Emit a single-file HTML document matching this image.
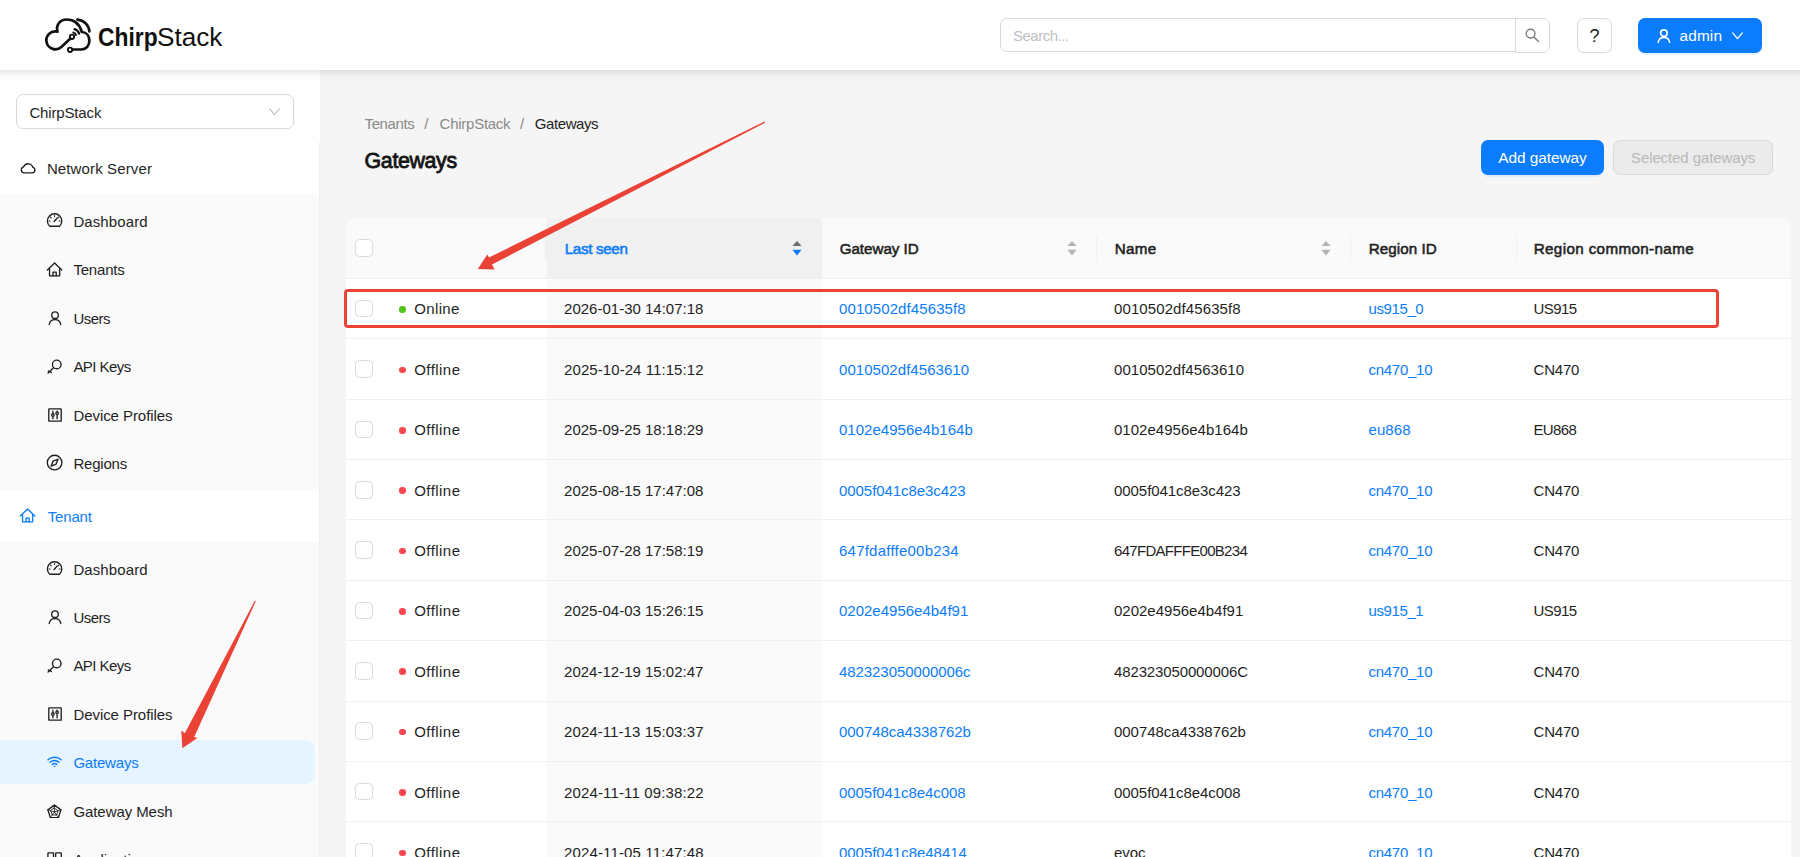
<!DOCTYPE html>
<html lang="en">
<head>
<meta charset="utf-8">
<title>ChirpStack LoRaWAN Network-Server - Gateways</title>
<style>

*{box-sizing:border-box}
html,body{margin:0;padding:0}
body{width:1800px;height:857px;overflow:hidden;position:relative;background:#f5f5f5;font-family:"Liberation Sans", Arial, sans-serif;font-size:15px;color:#1f1f1f}
.abs{position:absolute}
svg{display:block}
.t{position:absolute;white-space:nowrap;line-height:24px;height:24px}
#header{position:absolute;left:-30px;top:0;width:1860px;height:70px;background:#fff;box-shadow:0 2px 8px rgba(0,0,0,.13);z-index:10}
#sider{position:absolute;left:0;top:0;width:320px;height:857px;background:#fff;overflow:hidden}
.sub{position:absolute;left:0;width:319px;background:#fafafa}
.sel{position:absolute;left:0;width:315px;height:44px;background:#e6f4ff;border-radius:0 9px 9px 0}
#main{position:absolute;left:320px;top:0;width:1480px;height:857px;overflow:hidden}
#table{position:absolute;left:346px;top:218px;width:1445px;height:700px;background:#fff;border-radius:9px 9px 0 0;overflow:hidden}
.th{position:absolute;top:0;height:61px;background:#fafafa;border-bottom:1px solid #f0f0f0}
.th.sorted{background:#f0f0f0}
.sep{position:absolute;top:18px;width:1px;height:24.5px;background:#f0f0f0}
.row{position:absolute;left:0;width:1445px;height:60.5px;border-bottom:1px solid #f0f0f0}
.lk{color:#0b7cfb}
.cb{position:absolute;width:17.6px;height:17.6px;border:1px solid #d9d9d9;border-radius:4.4px;background:#fff}
.dot{position:absolute;width:6.6px;height:6.6px;border-radius:50%}
.sortcol{position:absolute;left:201px;width:275px;top:61px;height:700px;background:#fafafa}

</style>
</head>
<body>

<div id="sider">
<div class="abs" style="left:16px;top:94px;width:278px;height:35px;border:1px solid #d9d9d9;border-radius:7px;background:#fff"></div>
<div class="t" style="left:29.4px;top:100.8px;color:#1f1f1f;letter-spacing:-0.15px;">ChirpStack</div>
<svg class="abs" style="left:268.3px;top:105.3px;color:#bfbfbf" width="13" height="13" viewBox="0 0 16 16" fill="none" stroke="currentColor" stroke-width="1.3" stroke-linecap="round" stroke-linejoin="round"><path d="M2 4.8l6 7 6-7"/></svg>
<div class="abs" style="left:319px;top:142px;width:1px;height:720px;background:#f0f0f0"></div>
<div class="sub" style="top:194.9px;height:294px"></div>
<div class="sub" style="top:542.3px;height:320px"></div>
<div class="sel" style="top:739.8px"></div>
<svg class="abs" style="left:20.41px;top:160.01px;color:#1f1f1f" width="16.17" height="16.17" viewBox="0 0 16 16" fill="none" stroke="currentColor" stroke-width="1.33" stroke-linecap="round" stroke-linejoin="round"><path d="M4.3 12.8h7.8a2.8 2.8 0 0 0 .6-5.5A4.8 4.8 0 0 0 3.6 6.8a3.05 3.05 0 0 0 .7 6z"/></svg>
<div class="t" style="left:46.9px;top:156.8px;color:#1f1f1f;letter-spacing:0.13px;">Network Server</div>
<svg class="abs" style="left:46px;top:212.35px;color:#1f1f1f" width="17.2" height="17.2" viewBox="0 0 16 16" fill="none" stroke="currentColor" stroke-width="1.25" stroke-linecap="round" stroke-linejoin="round"><path d="M3.5 13.3h9a6.7 6.7 0 1 0-9 0z"/><path d="M7.6 8.9l2.7-3.2" stroke-width="1.4"/><path d="M8 3.3v1M4.2 4.8l.7.7M11.8 4.8l-.7.7M2.8 8.3h1M12.2 8.3h1" stroke-width="1"/></svg>
<div class="t" style="left:73.4px;top:209.8px;color:#1f1f1f;letter-spacing:0.1px;">Dashboard</div>
<svg class="abs" style="left:46px;top:260.75px;color:#1f1f1f" width="17.2" height="17.2" viewBox="0 0 16 16" fill="none" stroke="currentColor" stroke-width="1.25" stroke-linecap="round" stroke-linejoin="round"><path d="M1.3 8.3L8 1.9l6.7 6.4"/><path d="M3.3 7.2v6.6h9.4V7.2"/><path d="M6.5 13.8v-3.5h3v3.5"/></svg>
<div class="t" style="left:73.4px;top:257.8px;color:#1f1f1f;letter-spacing:-0.19px;">Tenants</div>
<svg class="abs" style="left:46.6px;top:309.75px;color:#1f1f1f" width="16" height="16" viewBox="0 0 16 16" fill="none" stroke="currentColor" stroke-width="1.34" stroke-linecap="round" stroke-linejoin="round"><circle cx="8" cy="5.2" r="3.3"/><path d="M2.2 14.5a5.9 5.9 0 0 1 11.6 0"/></svg>
<div class="t" style="left:73.4px;top:306.8px;color:#1f1f1f;letter-spacing:-0.54px;">Users</div>
<svg class="abs" style="left:46px;top:357.55px;color:#1f1f1f" width="17.2" height="17.2" viewBox="0 0 16 16" fill="none" stroke="currentColor" stroke-width="1.25" stroke-linecap="round" stroke-linejoin="round"><circle cx="10" cy="6" r="4"/><path d="M7 9L1.9 13.9M3.7 12.2l1.3 1.3M2.2 12.1l1 1"/></svg>
<div class="t" style="left:73.4px;top:354.8px;color:#1f1f1f;letter-spacing:-0.56px;">API Keys</div>
<svg class="abs" style="left:46.6px;top:406.55px;color:#1f1f1f" width="16" height="16" viewBox="0 0 16 16" fill="none" stroke="currentColor" stroke-width="1.34" stroke-linecap="round" stroke-linejoin="round"><rect x="1.8" y="1.8" width="12.4" height="12.4" rx=".5"/><path d="M5.9 4.2v2.3M5.9 9.4v2.4M10.1 4.2v.7M10.1 7.6v4.2"/><circle cx="5.9" cy="7.9" r="1.25"/><circle cx="10.1" cy="6.2" r="1.25"/></svg>
<div class="t" style="left:73.4px;top:403.8px;color:#1f1f1f;letter-spacing:-0.06px;">Device Profiles</div>
<svg class="abs" style="left:46px;top:454.35px;color:#1f1f1f" width="17.2" height="17.2" viewBox="0 0 16 16" fill="none" stroke="currentColor" stroke-width="1.25" stroke-linecap="round" stroke-linejoin="round"><circle cx="8" cy="8" r="6.8"/><path d="M11.2 4.8L9.4 9.4 4.8 11.2l1.8-4.6z"/></svg>
<div class="t" style="left:73.4px;top:451.8px;color:#1f1f1f;letter-spacing:-0.21px;">Regions</div>
<svg class="abs" style="left:19.4px;top:506.9px;color:#0b7cfb" width="17.2" height="17.2" viewBox="0 0 16 16" fill="none" stroke="currentColor" stroke-width="1.25" stroke-linecap="round" stroke-linejoin="round"><path d="M1.3 8.3L8 1.9l6.7 6.4"/><path d="M3.3 7.2v6.6h9.4V7.2"/><path d="M6.5 13.8v-3.5h3v3.5"/></svg>
<div class="t" style="left:47.7px;top:504.8px;color:#0b7cfb;letter-spacing:-0.15px;">Tenant</div>
<svg class="abs" style="left:46px;top:560.4px;color:#1f1f1f" width="17.2" height="17.2" viewBox="0 0 16 16" fill="none" stroke="currentColor" stroke-width="1.25" stroke-linecap="round" stroke-linejoin="round"><path d="M3.5 13.3h9a6.7 6.7 0 1 0-9 0z"/><path d="M7.6 8.9l2.7-3.2" stroke-width="1.4"/><path d="M8 3.3v1M4.2 4.8l.7.7M11.8 4.8l-.7.7M2.8 8.3h1M12.2 8.3h1" stroke-width="1"/></svg>
<div class="t" style="left:73.4px;top:557.8px;color:#1f1f1f;letter-spacing:0.1px;">Dashboard</div>
<svg class="abs" style="left:46.6px;top:609.4px;color:#1f1f1f" width="16" height="16" viewBox="0 0 16 16" fill="none" stroke="currentColor" stroke-width="1.34" stroke-linecap="round" stroke-linejoin="round"><circle cx="8" cy="5.2" r="3.3"/><path d="M2.2 14.5a5.9 5.9 0 0 1 11.6 0"/></svg>
<div class="t" style="left:73.4px;top:605.8px;color:#1f1f1f;letter-spacing:-0.54px;">Users</div>
<svg class="abs" style="left:46px;top:657.2px;color:#1f1f1f" width="17.2" height="17.2" viewBox="0 0 16 16" fill="none" stroke="currentColor" stroke-width="1.25" stroke-linecap="round" stroke-linejoin="round"><circle cx="10" cy="6" r="4"/><path d="M7 9L1.9 13.9M3.7 12.2l1.3 1.3M2.2 12.1l1 1"/></svg>
<div class="t" style="left:73.4px;top:653.8px;color:#1f1f1f;letter-spacing:-0.56px;">API Keys</div>
<svg class="abs" style="left:46.6px;top:706.2px;color:#1f1f1f" width="16" height="16" viewBox="0 0 16 16" fill="none" stroke="currentColor" stroke-width="1.34" stroke-linecap="round" stroke-linejoin="round"><rect x="1.8" y="1.8" width="12.4" height="12.4" rx=".5"/><path d="M5.9 4.2v2.3M5.9 9.4v2.4M10.1 4.2v.7M10.1 7.6v4.2"/><circle cx="5.9" cy="7.9" r="1.25"/><circle cx="10.1" cy="6.2" r="1.25"/></svg>
<div class="t" style="left:73.4px;top:702.8px;color:#1f1f1f;letter-spacing:-0.06px;">Device Profiles</div>
<svg class="abs" style="left:47.03px;top:754.33px;color:#0b7cfb" width="15.14" height="15.14" viewBox="0 0 16 16" fill="none" stroke="currentColor" stroke-width="1.42" stroke-linecap="round" stroke-linejoin="round"><path d="M1 6.2a10.2 10.2 0 0 1 14 0"/><path d="M3.3 8.7a7 7 0 0 1 9.4 0"/><path d="M5.6 11.1a3.6 3.6 0 0 1 4.8 0"/><circle cx="8" cy="13" r=".85" fill="currentColor" stroke="none"/></svg>
<div class="t" style="left:73.4px;top:750.8px;color:#0b7cfb;letter-spacing:-0.2px;">Gateways</div>
<svg class="abs" style="left:47.2px;top:803.61px;color:#1f1f1f" width="14.79" height="14.79" viewBox="0 0 16 16" fill="none" stroke="currentColor" stroke-width="1.45" stroke-linecap="round" stroke-linejoin="round"><path d="M8 1.2l7.1 5.15-2.7 8.35H3.6L.9 6.35z"/><path d="M8 4.5l3.9 2.85-1.5 4.55H5.6L4.1 7.35z" stroke-width="1"/><path d="M8 1.2v7.4M15.1 6.35L8 8.6M12.4 14.7L8 8.6M3.6 14.7L8 8.6M.9 6.35L8 8.6" stroke-width=".9"/></svg>
<div class="t" style="left:73.4px;top:799.8px;color:#1f1f1f;letter-spacing:-0.07px;">Gateway Mesh</div>
<svg class="abs" style="left:46px;top:850.8px;color:#1f1f1f" width="17.2" height="17.2" viewBox="0 0 16 16" fill="none" stroke="currentColor" stroke-width="1.25" stroke-linecap="round" stroke-linejoin="round"><rect x="1.8" y="1.8" width="5.2" height="5.2" rx=".4"/><rect x="9" y="1.8" width="5.2" height="5.2" rx=".4"/><rect x="1.8" y="9" width="5.2" height="5.2" rx=".4"/><rect x="9" y="9" width="5.2" height="5.2" rx=".4"/></svg>
<div class="t" style="left:73.4px;top:847.8px;color:#1f1f1f;letter-spacing:0.1px;">Applications</div>
</div>
<div id="main" style="left:0;width:1800px;pointer-events:none;background:transparent">
<div class="t" style="left:364.5px;top:111.8px;color:#8a8a8a;letter-spacing:-0.37px;">Tenants</div>
<div class="t" style="left:424.3px;top:111.8px;color:#8a8a8a;">/</div>
<div class="t" style="left:439.6px;top:111.8px;color:#8a8a8a;letter-spacing:-0.26px;">ChirpStack</div>
<div class="t" style="left:520px;top:111.8px;color:#8a8a8a;">/</div>
<div class="t" style="left:534.8px;top:111.8px;color:#1f1f1f;letter-spacing:-0.41px;">Gateways</div>
<div class="t" style="left:364.6px;top:146.3px;font-size:21.4px;line-height:30px;height:30px;color:#141414;letter-spacing:-0.37px;-webkit-text-stroke:.8px;">Gateways</div>
<div class="abs" style="left:1481px;top:140px;width:123px;height:34.5px;border-radius:7px;background:#0b7cfb;box-shadow:0 2px 0 rgba(5,145,255,.1)"></div>
<div class="t" style="left:1498.2px;top:145.8px;font-size:15.4px;color:#fff;letter-spacing:-0.04px;">Add gateway</div>
<div class="abs" style="left:1613px;top:140px;width:160px;height:34.5px;border-radius:7px;background:#ebebeb;border:1px solid #d9d9d9"></div>
<div class="t" style="left:1631px;top:145.8px;color:#b8b8b8;letter-spacing:-0.1px;">Selected gateways</div>
</div>
<div id="table">
<div class="sortcol"></div>
<div class="th" style="left:0px;width:201px"></div>
<div class="th sorted" style="left:201px;width:275px"></div>
<div class="t" style="left:218.7px;top:18.8px;font-size:15.2px;color:#0b7cfb;letter-spacing:-0.33px;-webkit-text-stroke:.55px;">Last seen</div>
<div class="th" style="left:476px;width:275px"></div>
<div class="t" style="left:493.7px;top:18.8px;font-size:15.2px;color:#1f1f1f;letter-spacing:-0.04px;-webkit-text-stroke:.55px;">Gateway ID</div>
<div class="th" style="left:751px;width:254px"></div>
<div class="t" style="left:768.7px;top:18.8px;font-size:15.2px;color:#1f1f1f;letter-spacing:0.33px;-webkit-text-stroke:.55px;">Name</div>
<div class="th" style="left:1005px;width:165px"></div>
<div class="t" style="left:1022.7px;top:18.8px;font-size:15.2px;color:#1f1f1f;letter-spacing:0.06px;-webkit-text-stroke:.55px;">Region ID</div>
<div class="th" style="left:1170px;width:275px"></div>
<div class="t" style="left:1187.7px;top:18.8px;font-size:15.2px;color:#1f1f1f;letter-spacing:0.37px;-webkit-text-stroke:.55px;">Region common-name</div>
<div class="sep" style="left:199px;width:2px"></div>
<div class="sep" style="left:749.7px"></div>
<div class="sep" style="left:1004.2px"></div>
<div class="sep" style="left:1169.5px"></div>
<div class="cb" style="left:9.2px;top:21.4px"></div>
<svg class="abs" style="left:446px;top:22px" width="10" height="16" viewBox="0 0 10 16"><path d="M5 .9L9.6 6H.4z" fill="#6b6b6b"/><path d="M5 15.4L.4 9.8h9.2z" fill="#0b7cfb"/></svg>
<svg class="abs" style="left:721px;top:22px" width="10" height="16" viewBox="0 0 10 16"><path d="M5 .9L9.6 6H.4z" fill="#b3b3b3"/><path d="M5 15.4L.4 9.8h9.2z" fill="#b3b3b3"/></svg>
<svg class="abs" style="left:975px;top:22px" width="10" height="16" viewBox="0 0 10 16"><path d="M5 .9L9.6 6H.4z" fill="#b3b3b3"/><path d="M5 15.4L.4 9.8h9.2z" fill="#b3b3b3"/></svg>
<div class="row" style="top:61px;height:60px">
<div class="cb" style="left:9.2px;top:20.74px"></div>
<div class="dot" style="left:53.2px;top:27.14px;background:#52c41a"></div>
<div class="t" style="left:68.2px;top:17.8px;color:#1f1f1f;letter-spacing:0.37px;">Online</div>
<div class="t" style="left:218.1px;top:17.8px;color:#1f1f1f;">2026-01-30 14:07:18</div>
<div class="t" style="left:493px;top:17.8px;color:#0b7cfb;letter-spacing:0.1px;">0010502df45635f8</div>
<div class="t" style="left:768px;top:17.8px;color:#1f1f1f;letter-spacing:0.1px;">0010502df45635f8</div>
<div class="t" style="left:1022.5px;top:17.8px;color:#0b7cfb;letter-spacing:-0.39px;">us915_0</div>
<div class="t" style="left:1187.5px;top:17.8px;color:#1f1f1f;letter-spacing:-0.56px;">US915</div>
</div>
<div class="row" style="top:121px;height:61px">
<div class="cb" style="left:9.2px;top:21.13px"></div>
<div class="dot" style="left:53.2px;top:27.53px;background:#fb464f"></div>
<div class="t" style="left:68.2px;top:18.8px;color:#1f1f1f;letter-spacing:0.45px;">Offline</div>
<div class="t" style="left:218.1px;top:18.8px;color:#1f1f1f;letter-spacing:0.07px;">2025-10-24 11:15:12</div>
<div class="t" style="left:493px;top:18.8px;color:#0b7cfb;letter-spacing:0.05px;">0010502df4563610</div>
<div class="t" style="left:768px;top:18.8px;color:#1f1f1f;letter-spacing:0.05px;">0010502df4563610</div>
<div class="t" style="left:1022.5px;top:18.8px;color:#0b7cfb;letter-spacing:-0.27px;">cn470_10</div>
<div class="t" style="left:1187.5px;top:18.8px;color:#1f1f1f;letter-spacing:-0.19px;">CN470</div>
</div>
<div class="row" style="top:182px;height:60px">
<div class="cb" style="left:9.2px;top:20.52px"></div>
<div class="dot" style="left:53.2px;top:26.92px;background:#fb464f"></div>
<div class="t" style="left:68.2px;top:17.8px;color:#1f1f1f;letter-spacing:0.45px;">Offline</div>
<div class="t" style="left:218.1px;top:17.8px;color:#1f1f1f;">2025-09-25 18:18:29</div>
<div class="t" style="left:493px;top:17.8px;color:#0b7cfb;letter-spacing:0.02px;">0102e4956e4b164b</div>
<div class="t" style="left:768px;top:17.8px;color:#1f1f1f;letter-spacing:0.02px;">0102e4956e4b164b</div>
<div class="t" style="left:1022.5px;top:17.8px;color:#0b7cfb;letter-spacing:0.07px;">eu868</div>
<div class="t" style="left:1187.5px;top:17.8px;color:#1f1f1f;letter-spacing:-0.64px;">EU868</div>
</div>
<div class="row" style="top:242px;height:60px">
<div class="cb" style="left:9.2px;top:20.91px"></div>
<div class="dot" style="left:53.2px;top:27.31px;background:#fb464f"></div>
<div class="t" style="left:68.2px;top:18.8px;color:#1f1f1f;letter-spacing:0.45px;">Offline</div>
<div class="t" style="left:218.1px;top:18.8px;color:#1f1f1f;">2025-08-15 17:47:08</div>
<div class="t" style="left:493px;top:18.8px;color:#0b7cfb;letter-spacing:-0.06px;">0005f041c8e3c423</div>
<div class="t" style="left:768px;top:18.8px;color:#1f1f1f;letter-spacing:-0.06px;">0005f041c8e3c423</div>
<div class="t" style="left:1022.5px;top:18.8px;color:#0b7cfb;letter-spacing:-0.27px;">cn470_10</div>
<div class="t" style="left:1187.5px;top:18.8px;color:#1f1f1f;letter-spacing:-0.19px;">CN470</div>
</div>
<div class="row" style="top:302px;height:61px">
<div class="cb" style="left:9.2px;top:21.3px"></div>
<div class="dot" style="left:53.2px;top:27.7px;background:#fb464f"></div>
<div class="t" style="left:68.2px;top:18.8px;color:#1f1f1f;letter-spacing:0.45px;">Offline</div>
<div class="t" style="left:218.1px;top:18.8px;color:#1f1f1f;">2025-07-28 17:58:19</div>
<div class="t" style="left:493px;top:18.8px;color:#0b7cfb;letter-spacing:0.23px;">647fdafffe00b234</div>
<div class="t" style="left:768px;top:18.8px;color:#1f1f1f;letter-spacing:-0.7px;">647FDAFFFE00B234</div>
<div class="t" style="left:1022.5px;top:18.8px;color:#0b7cfb;letter-spacing:-0.27px;">cn470_10</div>
<div class="t" style="left:1187.5px;top:18.8px;color:#1f1f1f;letter-spacing:-0.19px;">CN470</div>
</div>
<div class="row" style="top:363px;height:60px">
<div class="cb" style="left:9.2px;top:20.69px"></div>
<div class="dot" style="left:53.2px;top:27.09px;background:#fb464f"></div>
<div class="t" style="left:68.2px;top:17.8px;color:#1f1f1f;letter-spacing:0.45px;">Offline</div>
<div class="t" style="left:218.1px;top:17.8px;color:#1f1f1f;">2025-04-03 15:26:15</div>
<div class="t" style="left:493px;top:17.8px;color:#0b7cfb;">0202e4956e4b4f91</div>
<div class="t" style="left:768px;top:17.8px;color:#1f1f1f;">0202e4956e4b4f91</div>
<div class="t" style="left:1022.5px;top:17.8px;color:#0b7cfb;letter-spacing:-0.39px;">us915_1</div>
<div class="t" style="left:1187.5px;top:17.8px;color:#1f1f1f;letter-spacing:-0.56px;">US915</div>
</div>
<div class="row" style="top:423px;height:61px">
<div class="cb" style="left:9.2px;top:21.08px"></div>
<div class="dot" style="left:53.2px;top:27.48px;background:#fb464f"></div>
<div class="t" style="left:68.2px;top:18.8px;color:#1f1f1f;letter-spacing:0.45px;">Offline</div>
<div class="t" style="left:218.1px;top:18.8px;color:#1f1f1f;">2024-12-19 15:02:47</div>
<div class="t" style="left:493px;top:18.8px;color:#0b7cfb;letter-spacing:-0.07px;">482323050000006c</div>
<div class="t" style="left:768px;top:18.8px;color:#1f1f1f;letter-spacing:-0.13px;">482323050000006C</div>
<div class="t" style="left:1022.5px;top:18.8px;color:#0b7cfb;letter-spacing:-0.27px;">cn470_10</div>
<div class="t" style="left:1187.5px;top:18.8px;color:#1f1f1f;letter-spacing:-0.19px;">CN470</div>
</div>
<div class="row" style="top:484px;height:60px">
<div class="cb" style="left:9.2px;top:20.48px"></div>
<div class="dot" style="left:53.2px;top:26.88px;background:#fb464f"></div>
<div class="t" style="left:68.2px;top:17.8px;color:#1f1f1f;letter-spacing:0.45px;">Offline</div>
<div class="t" style="left:218.1px;top:17.8px;color:#1f1f1f;letter-spacing:0.07px;">2024-11-13 15:03:37</div>
<div class="t" style="left:493px;top:17.8px;color:#0b7cfb;letter-spacing:-0.05px;">000748ca4338762b</div>
<div class="t" style="left:768px;top:17.8px;color:#1f1f1f;letter-spacing:-0.05px;">000748ca4338762b</div>
<div class="t" style="left:1022.5px;top:17.8px;color:#0b7cfb;letter-spacing:-0.27px;">cn470_10</div>
<div class="t" style="left:1187.5px;top:17.8px;color:#1f1f1f;letter-spacing:-0.19px;">CN470</div>
</div>
<div class="row" style="top:544px;height:60px">
<div class="cb" style="left:9.2px;top:20.87px"></div>
<div class="dot" style="left:53.2px;top:27.27px;background:#fb464f"></div>
<div class="t" style="left:68.2px;top:18.8px;color:#1f1f1f;letter-spacing:0.45px;">Offline</div>
<div class="t" style="left:218.1px;top:18.8px;color:#1f1f1f;letter-spacing:0.13px;">2024-11-11 09:38:22</div>
<div class="t" style="left:493px;top:18.8px;color:#0b7cfb;letter-spacing:-0.06px;">0005f041c8e4c008</div>
<div class="t" style="left:768px;top:18.8px;color:#1f1f1f;letter-spacing:-0.06px;">0005f041c8e4c008</div>
<div class="t" style="left:1022.5px;top:18.8px;color:#0b7cfb;letter-spacing:-0.27px;">cn470_10</div>
<div class="t" style="left:1187.5px;top:18.8px;color:#1f1f1f;letter-spacing:-0.19px;">CN470</div>
</div>
<div class="row" style="top:604px;height:61px">
<div class="cb" style="left:9.2px;top:21.26px"></div>
<div class="dot" style="left:53.2px;top:27.66px;background:#fb464f"></div>
<div class="t" style="left:68.2px;top:18.8px;color:#1f1f1f;letter-spacing:0.45px;">Offline</div>
<div class="t" style="left:218.1px;top:18.8px;color:#1f1f1f;letter-spacing:0.13px;">2024-11-05 11:47:48</div>
<div class="t" style="left:493px;top:18.8px;color:#0b7cfb;letter-spacing:-0.04px;">0005f041c8e48414</div>
<div class="t" style="left:768px;top:18.8px;color:#1f1f1f;letter-spacing:-0.03px;">evoc</div>
<div class="t" style="left:1022.5px;top:18.8px;color:#0b7cfb;letter-spacing:-0.27px;">cn470_10</div>
<div class="t" style="left:1187.5px;top:18.8px;color:#1f1f1f;letter-spacing:-0.19px;">CN470</div>
</div>
</div>
<div id="header"><div class="abs" style="left:30px;top:0;width:1800px;height:70px">
<svg class="abs" style="left:40px;top:10px" width="60" height="50" viewBox="40 10 60 50" fill="none" stroke="#111" stroke-width="2.7" stroke-linecap="round" stroke-linejoin="round">
<path d="M70.4 38.6L61.35 46.9A8.95 8.95 0 1 1 57.5 31.6C55.6 25.2 60 19.5 66.7 19.5C73.5 19.5 79.3 23.6 81.7 31.4"/>
<path d="M81.9 32C86.8 32.3 89.4 36.3 89.4 40.6C89.4 45.6 86.2 49.5 81.5 49.5H72.4"/>
<path d="M77.4 19.6A12.9 12.9 0 0 1 89.4 31.4"/>
<path d="M74.6 29.2A6.7 6.7 0 0 1 79.1 33.6" stroke-width="2.3"/>
<path d="M73.3 32.4A3.6 3.6 0 0 1 76 35" stroke-width="2"/>
<circle cx="72" cy="36.8" r="2.15" stroke-width="1.9"/>
<circle cx="70.1" cy="49.8" r="2.15" stroke-width="1.9"/>
</svg>
<div class="abs" style="left:98.3px;top:19px;height:36px;line-height:36px;font-size:26.5px;color:#111;white-space:nowrap"><b style="display:inline-block;transform-origin:0 50%;transform:scaleX(.861)">Chirp</b></div>
<div class="abs" style="left:156.6px;top:19px;height:36px;line-height:36px;font-size:26.5px;color:#111;white-space:nowrap"><span style="display:inline-block;transform-origin:0 50%;transform:scaleX(.985)">Stack</span></div>
<div class="abs" style="left:1000px;top:18px;width:516px;height:34px;border:1px solid #d9d9d9;border-radius:7px 0 0 7px;background:#fff"></div>
<div class="t" style="left:1013px;top:23.8px;color:#bfbfbf;letter-spacing:-0.5px;">Search...</div>
<div class="abs" style="left:1515px;top:18px;width:35px;height:35px;border:1px solid #d9d9d9;border-radius:0 7px 7px 0;background:#fff"></div>
<svg class="abs" style="left:1524.4px;top:27.25px;color:#787878" width="16" height="16" viewBox="0 0 16 16" fill="none" stroke="currentColor" stroke-width="1.35" stroke-linecap="round" stroke-linejoin="round"><circle cx="6.6" cy="6.6" r="4.4"/><path d="M9.9 9.9l4.6 4.6"/></svg>
<div class="abs" style="left:1577px;top:18px;width:35px;height:35px;border:1px solid #d9d9d9;border-radius:7px;background:#fff;box-shadow:0 2px 0 rgba(0,0,0,.02)"></div>
<div class="t" style="left:1589.5px;top:24.14px;font-size:18px;color:#1f1f1f;">?</div>
<div class="abs" style="left:1638px;top:18px;width:124px;height:35px;border-radius:7px;background:#0b7cfb;box-shadow:0 2px 0 rgba(5,145,255,.1)"></div>
<svg class="abs" style="left:1655.6px;top:27.59px;color:#fff" width="15.81" height="15.81" viewBox="0 0 16 16" fill="none" stroke="currentColor" stroke-width="1.61" stroke-linecap="round" stroke-linejoin="round"><circle cx="8" cy="5.2" r="3.3"/><path d="M2.2 14.5a5.9 5.9 0 0 1 11.6 0"/></svg>
<div class="t" style="left:1679.5px;top:23.8px;font-size:15.4px;color:#fff;letter-spacing:0.14px;">admin</div>
<svg class="abs" style="left:1731px;top:29.3px;color:#fff" width="13" height="13" viewBox="0 0 16 16" fill="none" stroke="currentColor" stroke-width="1.6" stroke-linecap="round" stroke-linejoin="round"><path d="M2 4.8l6 7 6-7"/></svg>
</div></div>
<svg class="abs" style="left:0;top:0;z-index:20" width="1800" height="857" viewBox="0 0 1800 857">
<rect x="345.5" y="290.5" width="1372" height="36" rx="2.5" fill="none" stroke="#ea4336" stroke-width="3"/>
<polygon points="764.3,121.6 765.2,122.6 492,264.5 494.6,269.6 477.8,269 487.3,254.5 489,257.5" fill="#ea4336"/>
<polygon points="254.8,600.7 255.8,601.2 194.1,737.2 197.7,737.8 182.4,748.3 181.2,730.5 184.8,733.3" fill="#ea4336"/>
</svg>
</body>
</html>
